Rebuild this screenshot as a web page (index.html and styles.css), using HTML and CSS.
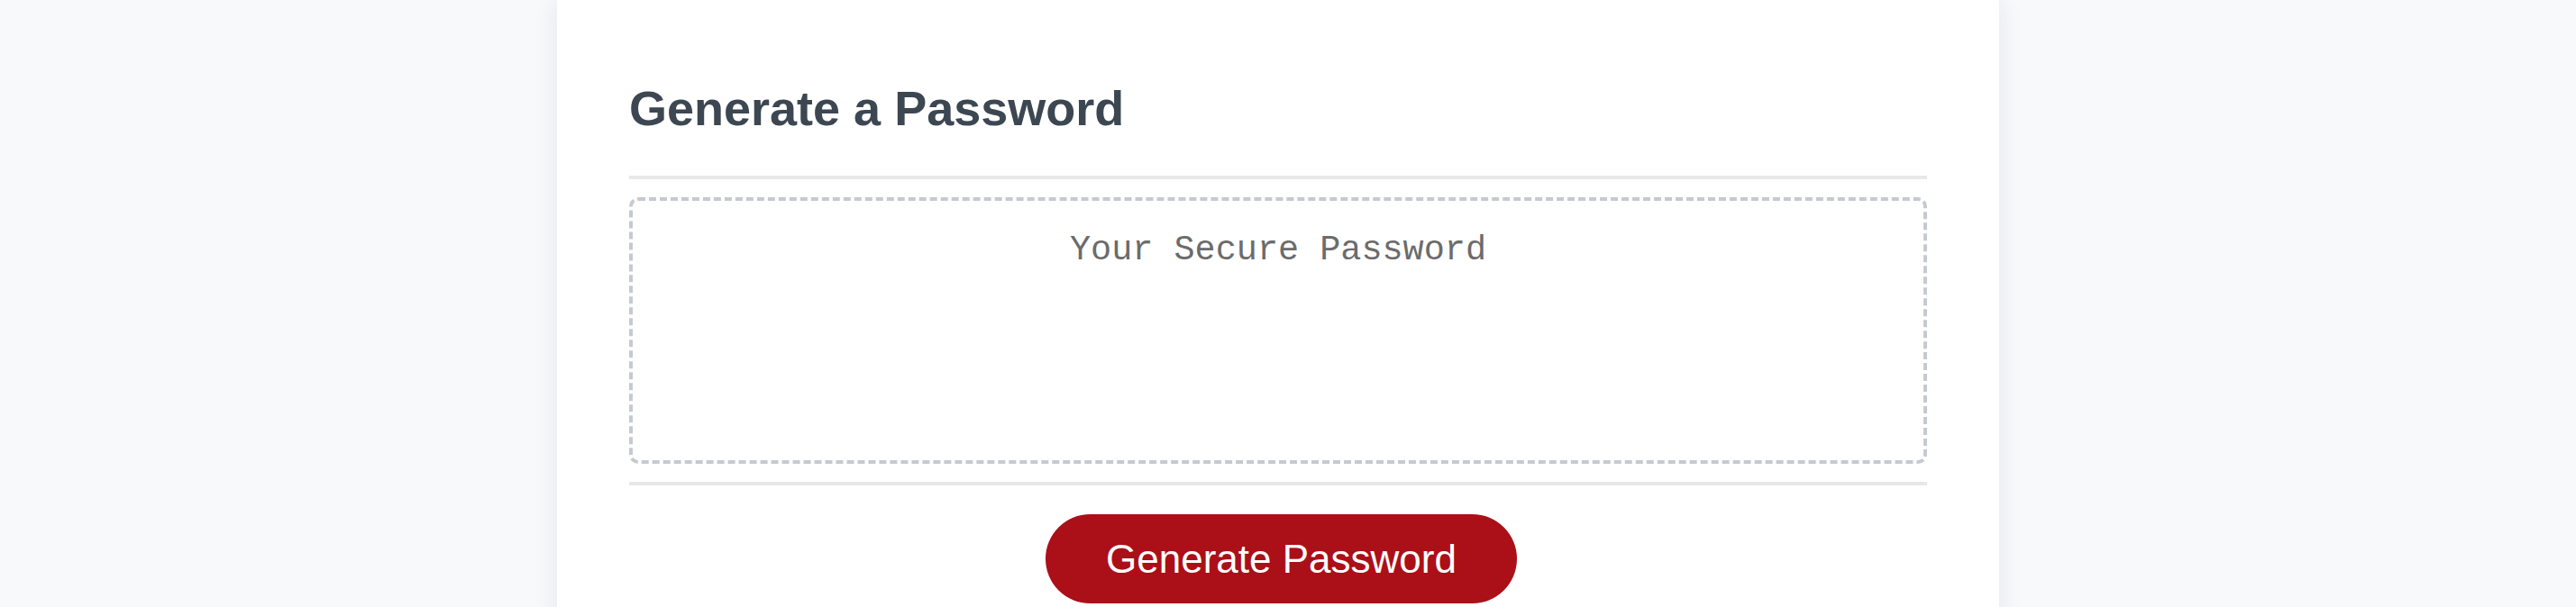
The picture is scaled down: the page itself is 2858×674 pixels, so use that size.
FILE: index.html
```html
<!DOCTYPE html>
<html lang="en">
<head>
<meta charset="utf-8">
<title>Password Generator</title>
<link rel="stylesheet" href="styles.css">
</head>
<body>
  <div class="page">
    <div class="card">
      <div class="card-header">
        <h2 class="title">Generate a Password</h2>
      </div>
      <div class="card-body">
        <div class="password-box" role="textbox" aria-readonly="true">Your Secure Password</div>
      </div>
      <div class="card-footer">
        <button class="btn" type="button">Generate Password</button>
      </div>
    </div>
  </div>
</body>
</html>
```

FILE: styles.css
```css
html, body {
  margin: 0;
  padding: 0;
  background: #f8f9fb;
  height: 100%;
  overflow: hidden;
}

.page {
  display: flex;
  justify-content: center;
  padding-right: 22px;
  min-height: 100%;
}

.card {
  width: 1600px;
  box-sizing: border-box;
  padding: 0 80px 80px;
  background: #ffffff;
  box-shadow: 0 0 26px rgba(20, 30, 50, 0.09);
  min-height: 800px;
}

.card-header {
  padding: 87px 0 41px;
  border-bottom: 4px solid #e8e8e8;
}

.title {
  margin: 0;
  font-family: "Liberation Sans", Arial, Helvetica, sans-serif;
  font-weight: 700;
  font-size: 54px;
  line-height: 67px;
  color: #3c4752;
}

.card-body {
  padding: 20px 0;
}

.password-box {
  box-sizing: border-box;
  height: 296px;
  border: 4px dashed #c5cad1;
  border-radius: 10px;
  padding: 33px 20px 0;
  text-align: center;
  font-family: "Liberation Mono", "Courier New", monospace;
  font-size: 38.5px;
  line-height: 44px;
  color: #6b6b6b;
}

.card-footer {
  border-top: 4px solid #e8e8e8;
  padding-top: 32px;
  display: flex;
  justify-content: center;
}

.btn {
  border: none;
  margin-left: 7px;
  background: #ab0f18;
  color: #ffffff;
  font-family: "Liberation Sans", Arial, Helvetica, sans-serif;
  font-size: 44px;
  line-height: 53px;
  padding: 23px 67px;
  border-radius: 60px;
  cursor: pointer;
}
```
